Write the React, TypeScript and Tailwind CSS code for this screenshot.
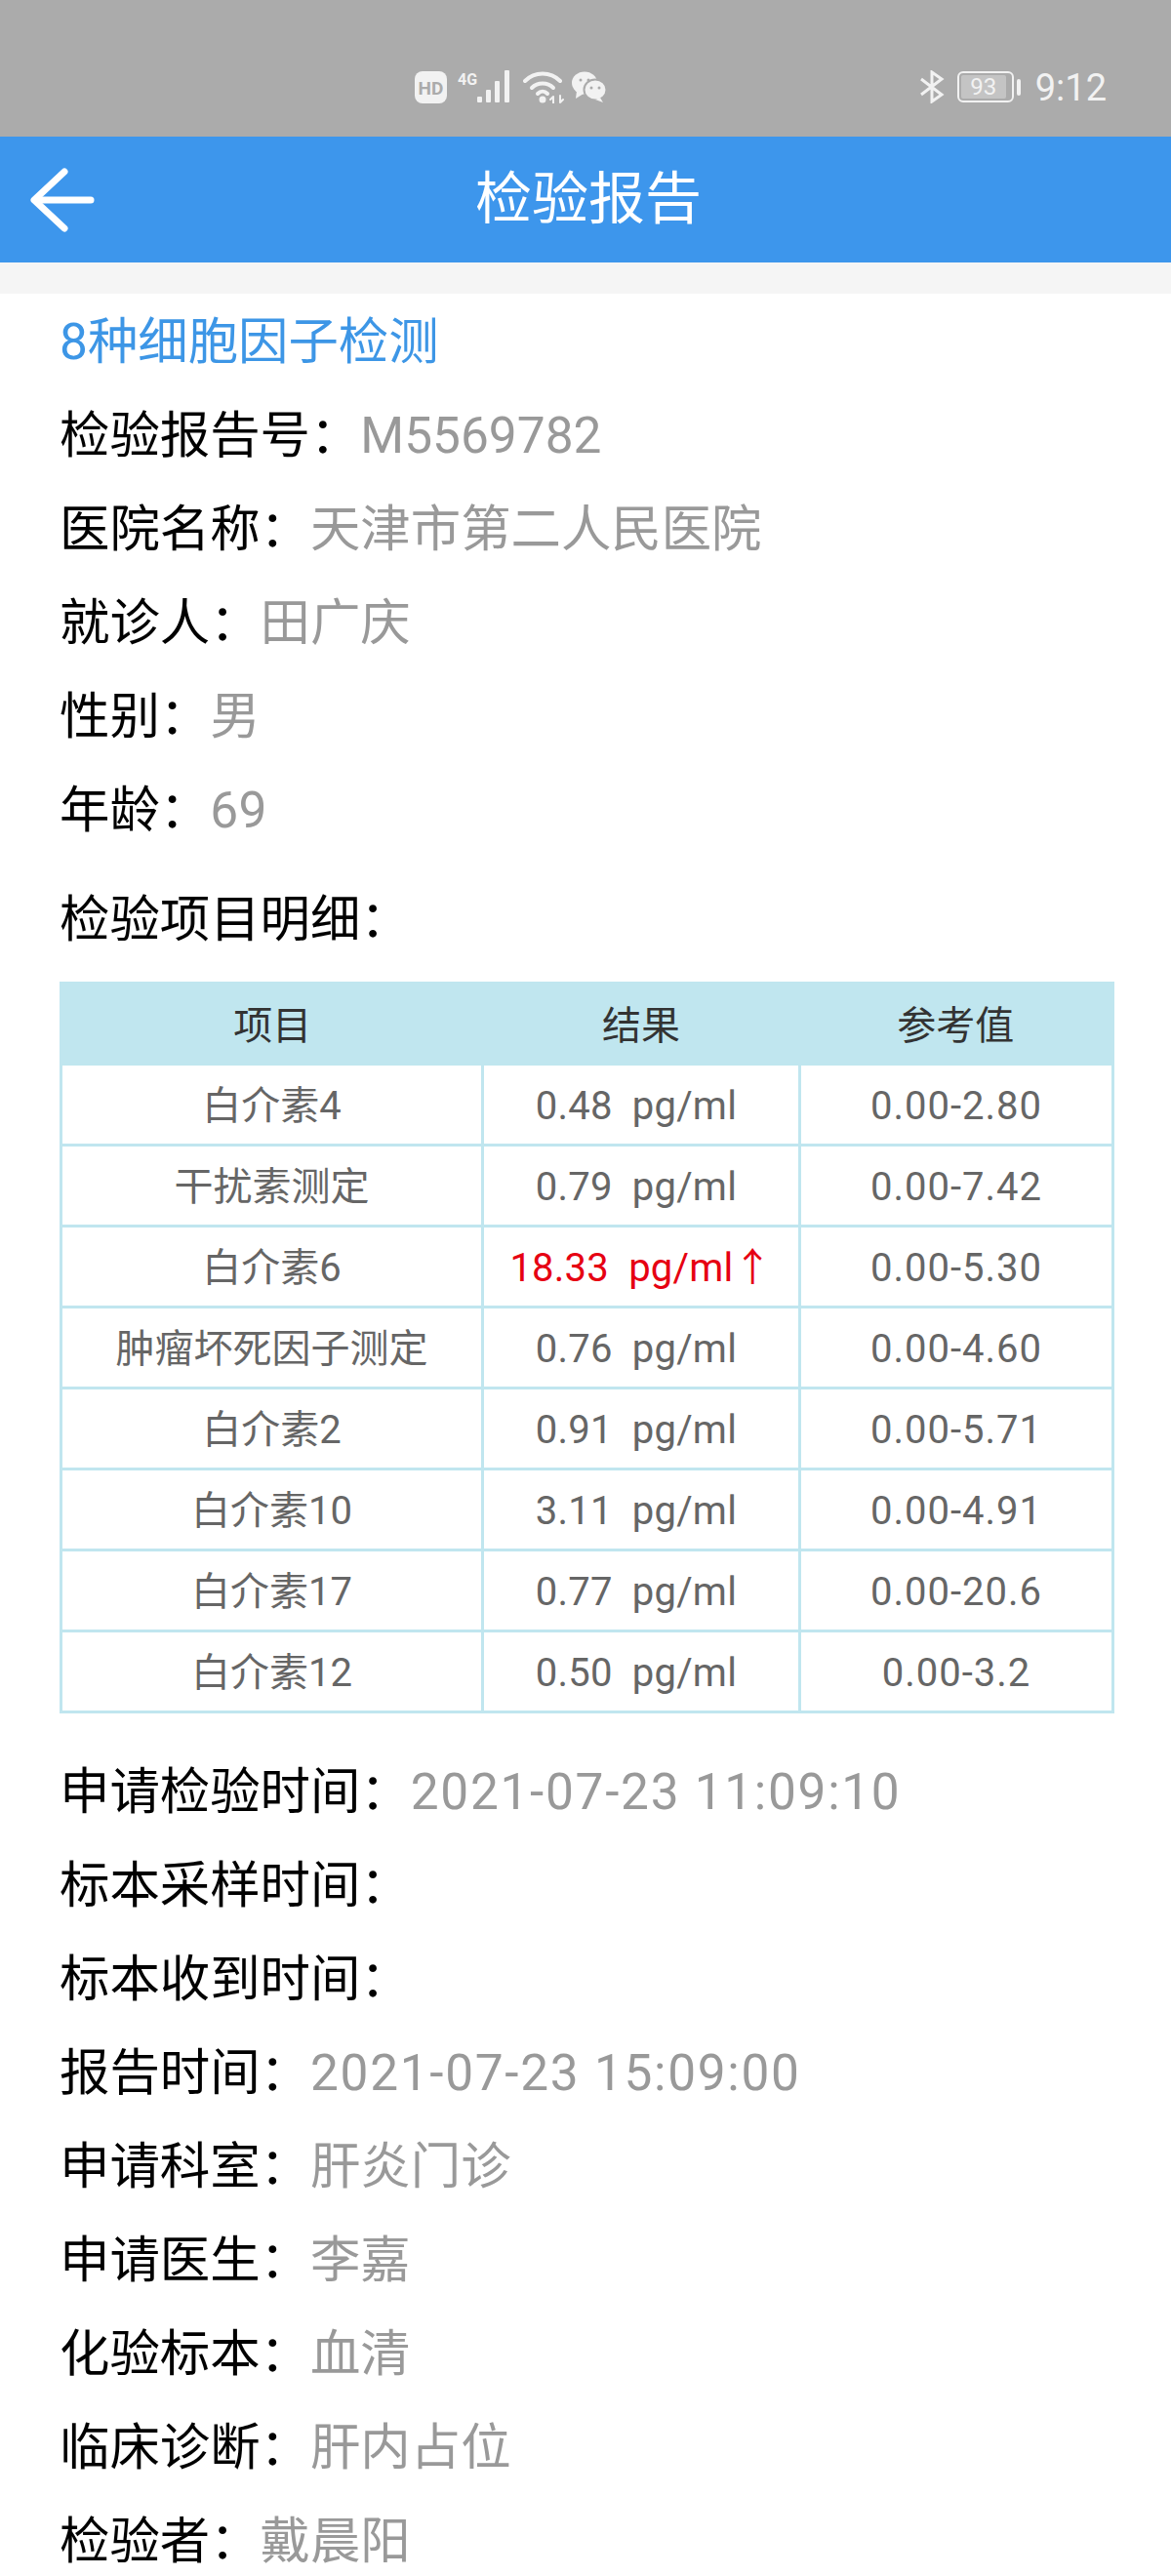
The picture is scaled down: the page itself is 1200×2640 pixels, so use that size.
const sans = "font-['Roboto','Noto_Sans_CJK_SC',sans-serif]"

const topFields = [
  { label: "检验报告号：", value: "M5569782" },
  { label: "医院名称：", value: "天津市第二人民医院" },
  { label: "就诊人：", value: "田广庆" },
  { label: "性别：", value: "男" },
  { label: "年龄：", value: "69", spacing: "tracking-[0.5px]" },
]

const bottomFields = [
  { label: "申请检验时间：", value: "2021-07-23 11:09:10", spacing: "tracking-[1.7px]" },
  { label: "标本采样时间：", value: "" },
  { label: "标本收到时间：", value: "" },
  { label: "报告时间：", value: "2021-07-23 15:09:00", spacing: "tracking-[1.7px]" },
  { label: "申请科室：", value: "肝炎门诊" },
  { label: "申请医生：", value: "李嘉" },
  { label: "化验标本：", value: "血清" },
  { label: "临床诊断：", value: "肝内占位" },
  { label: "检验者：", value: "戴晨阳" },
]

const rows = [
  { name: "白介素4", result: "0.48  pg/ml ", range: "0.00-2.80" },
  { name: "干扰素测定", result: "0.79  pg/ml ", range: "0.00-7.42" },
  { name: "白介素6", result: "18.33  pg/ml↑", range: "0.00-5.30", high: true },
  { name: "肿瘤坏死因子测定", result: "0.76  pg/ml ", range: "0.00-4.60" },
  { name: "白介素2", result: "0.91  pg/ml ", range: "0.00-5.71" },
  { name: "白介素10", result: "3.11  pg/ml ", range: "0.00-4.91" },
  { name: "白介素17", result: "0.77  pg/ml ", range: "0.00-20.6" },
  { name: "白介素12", result: "0.50  pg/ml ", range: "0.00-3.2" },
]

function Field({ label, value, spacing = "" }: { label: string; value: string; spacing?: string }) {
  return (
    <div className="h-[96px] flex items-center text-[51.4px] whitespace-nowrap">
      <span className="text-black">{label}</span>
      <span className={`text-[#999999] ${spacing}`}>{value}</span>
    </div>
  )
}

function StatusBar() {
  return (
    <div className="h-[140px] bg-[#ababab] flex items-center justify-between pt-[38px] pl-[425px] pr-[66px] text-[#f2f2f2]">
      <div className="flex items-center gap-[11px]">
        <svg width="33" height="33" viewBox="0 0 33 33">
          <rect width="33" height="33" rx="8" fill="#f2f2f2" />
          <text x="16.5" y="23.5" textAnchor="middle" fontSize="19" fontWeight="700" fontFamily="Roboto" fill="#ababab">
            HD
          </text>
        </svg>
        <svg width="56" height="34" viewBox="0 0 56 34" fill="#f2f2f2">
          <text x="0" y="15" fontSize="16" fontWeight="700" fontFamily="Roboto">
            4G
          </text>
          <rect x="20" y="27" width="5" height="6" rx="1" />
          <rect x="29" y="20" width="5" height="13" rx="1" />
          <rect x="38" y="11" width="5" height="22" rx="1" />
          <rect x="48" y="0" width="5" height="33" rx="1" />
        </svg>
        <svg width="42" height="34" viewBox="0 0 42 34" fill="none" stroke="#f2f2f2" strokeWidth="4" strokeLinecap="round">
          <path d="M2 11 C12 1 28 1 38 11" />
          <path d="M9 18 C15 12 25 12 31 18" />
          <path d="M15 24 C18 21 22 21 25 24" />
          <circle cx="20" cy="30" r="1.5" fill="#f2f2f2" />
          <path d="M31 34 V27 M28 30 L31 27" strokeWidth="2" />
          <path d="M38 26 V33 M41 30 L38 33" strokeWidth="2" />
        </svg>
        <svg width="36" height="32" viewBox="0 0 36 32" className="-ml-[3px]">
          <ellipse cx="13" cy="12" rx="13" ry="11.5" fill="#f2f2f2" />
          <path d="M5 20 L4 28 L12 23 Z" fill="#f2f2f2" />
          <circle cx="9" cy="9" r="1.5" fill="#ababab" />
          <circle cx="17" cy="9" r="1.5" fill="#ababab" />
          <ellipse cx="24" cy="19" rx="11.5" ry="10.5" fill="#f2f2f2" stroke="#ababab" strokeWidth="2" />
          <path d="M29 27 L32 32 L24 29 Z" fill="#f2f2f2" />
          <circle cx="20" cy="17" r="1.5" fill="#ababab" />
          <circle cx="28" cy="17" r="1.5" fill="#ababab" />
        </svg>
      </div>
      <div className="flex items-center">
        <svg width="26" height="34" viewBox="0 0 26 34" fill="none" stroke="#f2f2f2" strokeWidth="3" className="mr-[13px]">
          <path d="M2 9 L23 25 L13 32 L13 2 L23 9 L2 25" />
        </svg>
        <div className="flex items-center gap-[3px] mr-[15px]">
          <div className="w-[58px] h-[32px] rounded-[6px] border-[2px] border-[#f2f2f2] p-[2px]">
            <div className="h-full w-[46px] bg-[#c4c4c4] rounded-[2px] flex items-center justify-center text-[24px]">93</div>
          </div>
          <div className="w-[4px] h-[17px] bg-[#f2f2f2] rounded-[2px]" />
        </div>
        <span className="mt-[2px] text-[38px] leading-[38px]">9:12</span>
      </div>
    </div>
  )
}

export default function App() {
  return (
    <div className={`w-[1200px] h-[2640px] overflow-hidden bg-white ${sans}`}>
      <StatusBar />

      <div className="relative h-[129px] bg-[#3d96ec] flex items-center justify-center">
        <svg className="absolute left-[30px] top-[32px]" width="70" height="66" viewBox="0 0 70 66" fill="none" stroke="white" strokeWidth="7" strokeLinecap="round" strokeLinejoin="round">
          <path d="M63 33 H7" />
          <path d="M36 4 L5 33 L36 62" />
        </svg>
        <h1 className="ml-[6px] text-[58px] text-white font-normal">检验报告</h1>
      </div>
      <div className="h-[32px] bg-[#f5f5f5]" />

      <div className="px-[61px]">
        <div className="h-[96px] mt-[2px] flex items-center text-[51.4px] text-[#3d96e6]">8种细胞因子检测</div>
        {topFields.map((f) => (
          <Field key={f.label} label={f.label} value={f.value} spacing={f.spacing} />
        ))}

        <div className="h-[96px] mt-[16px] flex items-center text-[51.4px] text-black">检验项目明细：</div>

        <table className="w-[1081px] mt-[15px] table-fixed border-collapse border-[3px] border-[#c0e6ef] text-[40px] text-center">
          <thead>
            <tr className="h-[83px] bg-[#c0e6ef] text-[#333333]">
              <th className="w-[432px] pt-[6px] font-normal">项目</th>
              <th className="w-[325px] pt-[6px] font-normal">结果</th>
              <th className="pt-[6px] font-normal">参考值</th>
            </tr>
          </thead>
          <tbody className="text-[#666666]">
            {rows.map((r) => (
              <tr key={r.name} className="h-[83px]">
                <td className="pt-[3px] border-[3px] border-[#c0e6ef]">{r.name}</td>
                <td className={`pt-[3px] border-[3px] border-[#c0e6ef] whitespace-pre tracking-[0.2px] ${r.high ? "text-[#e60012]" : ""}`}>{r.result}</td>
                <td className="pt-[3px] border-[3px] border-[#c0e6ef] tracking-[1px]">{r.range}</td>
              </tr>
            ))}
          </tbody>
        </table>

        <div className="mt-[33px]">
          {bottomFields.map((f) => (
            <Field key={f.label} label={f.label} value={f.value} spacing={f.spacing} />
          ))}
        </div>
      </div>
    </div>
  )
}
